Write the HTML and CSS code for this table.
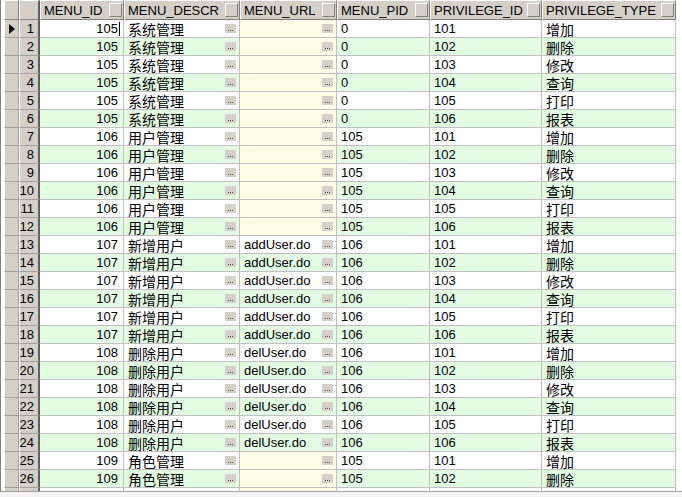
FILE: index.html
```html
<!DOCTYPE html>
<html>
<head>
<meta charset="utf-8">
<link rel="stylesheet" href="styles.css">
</head>
<body>
<div class="frame">
<div class="grid">
  <div class="row">
    <div class="h"></div><div class="h hn"></div>
    <div class="h">MENU_ID<i class="hb"></i></div>
    <div class="h">MENU_DESCR<i class="hb"></i></div>
    <div class="h">MENU_URL<i class="hb"></i></div>
    <div class="h">MENU_PID<i class="hb"></i></div>
    <div class="h">PRIVILEGE_ID<i class="hb"></i></div>
    <div class="h">PRIVILEGE_TYPE<i class="hb"></i></div>
  </div>
  <div class="row"><div class="ind"><i class="arrow"></i></div><div class="num">1</div><div class="c r">105<i class="caret"></i></div><div class="c z">系统管理<i class="dots"></i></div><div class="c nul"><i class="dots"></i></div><div class="c">0</div><div class="c">101</div><div class="c z">增加</div></div>
  <div class="row alt"><div class="ind"></div><div class="num">2</div><div class="c r">105</div><div class="c z">系统管理<i class="dots"></i></div><div class="c nul"><i class="dots"></i></div><div class="c">0</div><div class="c">102</div><div class="c z">删除</div></div>
  <div class="row"><div class="ind"></div><div class="num">3</div><div class="c r">105</div><div class="c z">系统管理<i class="dots"></i></div><div class="c nul"><i class="dots"></i></div><div class="c">0</div><div class="c">103</div><div class="c z">修改</div></div>
  <div class="row alt"><div class="ind"></div><div class="num">4</div><div class="c r">105</div><div class="c z">系统管理<i class="dots"></i></div><div class="c nul"><i class="dots"></i></div><div class="c">0</div><div class="c">104</div><div class="c z">查询</div></div>
  <div class="row"><div class="ind"></div><div class="num">5</div><div class="c r">105</div><div class="c z">系统管理<i class="dots"></i></div><div class="c nul"><i class="dots"></i></div><div class="c">0</div><div class="c">105</div><div class="c z">打印</div></div>
  <div class="row alt"><div class="ind"></div><div class="num">6</div><div class="c r">105</div><div class="c z">系统管理<i class="dots"></i></div><div class="c nul"><i class="dots"></i></div><div class="c">0</div><div class="c">106</div><div class="c z">报表</div></div>
  <div class="row"><div class="ind"></div><div class="num">7</div><div class="c r">106</div><div class="c z">用户管理<i class="dots"></i></div><div class="c nul"><i class="dots"></i></div><div class="c">105</div><div class="c">101</div><div class="c z">增加</div></div>
  <div class="row alt"><div class="ind"></div><div class="num">8</div><div class="c r">106</div><div class="c z">用户管理<i class="dots"></i></div><div class="c nul"><i class="dots"></i></div><div class="c">105</div><div class="c">102</div><div class="c z">删除</div></div>
  <div class="row"><div class="ind"></div><div class="num">9</div><div class="c r">106</div><div class="c z">用户管理<i class="dots"></i></div><div class="c nul"><i class="dots"></i></div><div class="c">105</div><div class="c">103</div><div class="c z">修改</div></div>
  <div class="row alt"><div class="ind"></div><div class="num">10</div><div class="c r">106</div><div class="c z">用户管理<i class="dots"></i></div><div class="c nul"><i class="dots"></i></div><div class="c">105</div><div class="c">104</div><div class="c z">查询</div></div>
  <div class="row"><div class="ind"></div><div class="num">11</div><div class="c r">106</div><div class="c z">用户管理<i class="dots"></i></div><div class="c nul"><i class="dots"></i></div><div class="c">105</div><div class="c">105</div><div class="c z">打印</div></div>
  <div class="row alt"><div class="ind"></div><div class="num">12</div><div class="c r">106</div><div class="c z">用户管理<i class="dots"></i></div><div class="c nul"><i class="dots"></i></div><div class="c">105</div><div class="c">106</div><div class="c z">报表</div></div>
  <div class="row"><div class="ind"></div><div class="num">13</div><div class="c r">107</div><div class="c z">新增用户<i class="dots"></i></div><div class="c">addUser.do<i class="dots"></i></div><div class="c">106</div><div class="c">101</div><div class="c z">增加</div></div>
  <div class="row alt"><div class="ind"></div><div class="num">14</div><div class="c r">107</div><div class="c z">新增用户<i class="dots"></i></div><div class="c">addUser.do<i class="dots"></i></div><div class="c">106</div><div class="c">102</div><div class="c z">删除</div></div>
  <div class="row"><div class="ind"></div><div class="num">15</div><div class="c r">107</div><div class="c z">新增用户<i class="dots"></i></div><div class="c">addUser.do<i class="dots"></i></div><div class="c">106</div><div class="c">103</div><div class="c z">修改</div></div>
  <div class="row alt"><div class="ind"></div><div class="num">16</div><div class="c r">107</div><div class="c z">新增用户<i class="dots"></i></div><div class="c">addUser.do<i class="dots"></i></div><div class="c">106</div><div class="c">104</div><div class="c z">查询</div></div>
  <div class="row"><div class="ind"></div><div class="num">17</div><div class="c r">107</div><div class="c z">新增用户<i class="dots"></i></div><div class="c">addUser.do<i class="dots"></i></div><div class="c">106</div><div class="c">105</div><div class="c z">打印</div></div>
  <div class="row alt"><div class="ind"></div><div class="num">18</div><div class="c r">107</div><div class="c z">新增用户<i class="dots"></i></div><div class="c">addUser.do<i class="dots"></i></div><div class="c">106</div><div class="c">106</div><div class="c z">报表</div></div>
  <div class="row"><div class="ind"></div><div class="num">19</div><div class="c r">108</div><div class="c z">删除用户<i class="dots"></i></div><div class="c">delUser.do<i class="dots"></i></div><div class="c">106</div><div class="c">101</div><div class="c z">增加</div></div>
  <div class="row alt"><div class="ind"></div><div class="num">20</div><div class="c r">108</div><div class="c z">删除用户<i class="dots"></i></div><div class="c">delUser.do<i class="dots"></i></div><div class="c">106</div><div class="c">102</div><div class="c z">删除</div></div>
  <div class="row"><div class="ind"></div><div class="num">21</div><div class="c r">108</div><div class="c z">删除用户<i class="dots"></i></div><div class="c">delUser.do<i class="dots"></i></div><div class="c">106</div><div class="c">103</div><div class="c z">修改</div></div>
  <div class="row alt"><div class="ind"></div><div class="num">22</div><div class="c r">108</div><div class="c z">删除用户<i class="dots"></i></div><div class="c">delUser.do<i class="dots"></i></div><div class="c">106</div><div class="c">104</div><div class="c z">查询</div></div>
  <div class="row"><div class="ind"></div><div class="num">23</div><div class="c r">108</div><div class="c z">删除用户<i class="dots"></i></div><div class="c">delUser.do<i class="dots"></i></div><div class="c">106</div><div class="c">105</div><div class="c z">打印</div></div>
  <div class="row alt"><div class="ind"></div><div class="num">24</div><div class="c r">108</div><div class="c z">删除用户<i class="dots"></i></div><div class="c">delUser.do<i class="dots"></i></div><div class="c">106</div><div class="c">106</div><div class="c z">报表</div></div>
  <div class="row"><div class="ind"></div><div class="num">25</div><div class="c r">109</div><div class="c z">角色管理<i class="dots"></i></div><div class="c nul"><i class="dots"></i></div><div class="c">105</div><div class="c">101</div><div class="c z">增加</div></div>
  <div class="row alt"><div class="ind"></div><div class="num">26</div><div class="c r">109</div><div class="c z">角色管理<i class="dots"></i></div><div class="c nul"><i class="dots"></i></div><div class="c">105</div><div class="c">102</div><div class="c z">删除</div></div>
  <div class="row"><div class="ind"></div><div class="num">27</div><div class="c r">109</div><div class="c z">角色管理<i class="dots"></i></div><div class="c nul"><i class="dots"></i></div><div class="c">105</div><div class="c">103</div><div class="c z">修改</div></div>
</div>
</div>
</body>
</html>
```
FILE: styles.css
```css
html, body {
  margin: 0;
  padding: 0;
  background: #f4f4f4;
}
body {
  font-family: "Liberation Sans", "Noto Sans CJK SC", sans-serif;
  font-size: 13px;
  color: #000;
}
.frame {
  width: 682px;
  height: 492px;
  box-sizing: border-box;
  padding-left: 3px;
  border-left: 1px solid #808080;
  border-bottom: 1px solid #a0a0a0;
  background: #ffffff;
  overflow: hidden;
}
.grid {
  display: grid;
  grid-template-columns: 15px 21px 84px 116px 97px 93px 112px 134px;
  grid-template-rows: 20px;
  grid-auto-rows: 18px;
  width: 672px;
}
.row {
  display: contents;
}
.row > div {
  box-sizing: border-box;
  display: flex;
  align-items: center;
  white-space: nowrap;
  overflow: hidden;
}
.h {
  background: #d4d0c8;
  border-top: 1px solid #ffffff;
  border-left: 1px solid #ffffff;
  border-right: 1px solid #808080;
  border-bottom: 1px solid #808080;
  padding-left: 3px;
}
.h.hn {
  border-right: 2px solid #606060;
}
.hb {
  margin-left: auto;
  margin-right: 1px;
  width: 13px;
  height: 14px;
  box-sizing: border-box;
  background: #d4d0c8;
  border-top: 1px solid #ffffff;
  border-left: 1px solid #ffffff;
  border-right: 1px solid #808080;
  border-bottom: 1px solid #808080;
  flex: none;
}
.ind {
  background: #d4d0c8;
  border-left: 1px solid #ffffff;
  border-right: 1px solid #a0a0a0;
  border-bottom: 1px solid #a0a0a0;
  justify-content: center;
}
.arrow {
  width: 0;
  height: 0;
  border-top: 5px solid transparent;
  border-bottom: 5px solid transparent;
  border-left: 6px solid #000;
  margin-left: 1px;
}
.num {
  background: #d4d0c8;
  border-left: 1px solid #ffffff;
  border-right: 2px solid #606060;
  border-bottom: 1px solid #a0a0a0;
  justify-content: flex-end;
  padding-right: 4px;
}
.c {
  background: #ffffff;
  border-right: 1px solid #c0c0c0;
  border-bottom: 1px solid #c0c0c0;
  padding-left: 4px;
}
.alt > .c {
  background: #e3fde3;
}
.row > .c.nul {
  background: #fffce8;
}
.c.r {
  justify-content: flex-end;
  padding-right: 5px;
}
.z {
  font-size: 14px;
}
.caret {
  width: 1px;
  height: 14px;
  background: #000;
  margin-right: -2px;
  margin-left: 1px;
}
.dots {
  margin-left: auto;
  margin-right: 3px;
  width: 11px;
  height: 9px;
  flex: none;
  background:
    linear-gradient(#505050, #505050) 3px 6px / 1px 1px no-repeat,
    linear-gradient(#505050, #505050) 5px 6px / 1px 1px no-repeat,
    linear-gradient(#505050, #505050) 7px 6px / 1px 1px no-repeat,
    #d4d0c8;
}
```
